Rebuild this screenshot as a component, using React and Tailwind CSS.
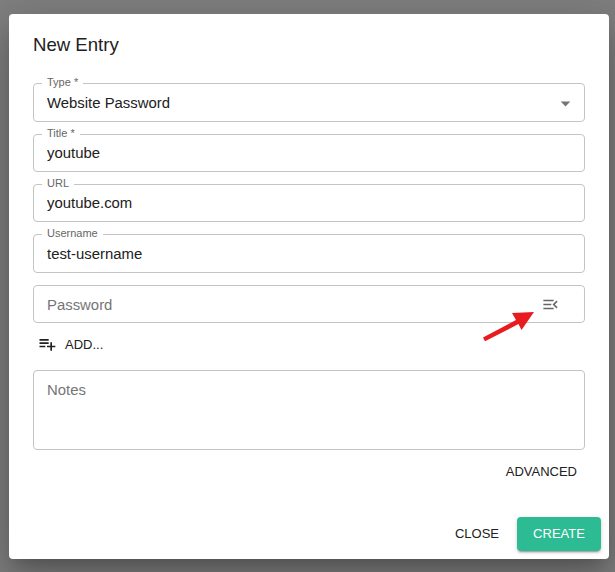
import { useState } from "react";
import { MdArrowDropDown, MdMenuOpen, MdPlaylistAdd } from "react-icons/md";

const Field = ({ label, value, onChange, className, children }) => (
  <fieldset className={`flex min-w-0 flex-col rounded-[4px] border border-[#c4c4c4] ${className}`}>
    <legend className="ml-2 h-[11px] px-[5px] text-[11px] leading-[9px] text-[#666666]">{label}</legend>
    <div className="flex h-[26px] items-center pr-[7px] pl-[13px]">
      <input className="min-w-0 flex-1 text-[14.9px] leading-[22px] outline-none" value={value} onChange={onChange} />
      {children}
    </div>
  </fieldset>
);

export default function App() {
  const [ entry, setEntry ] = useState({
    type: 'Website Password',
    title: 'youtube',
    url: 'youtube.com',
    username: 'test-username',
    password: '',
    notes: '',
  });

  const update = (key) => (e) => setEntry({ ...entry, [key]: e.target.value });

  return (
    <div className="h-screen overflow-hidden bg-[#7f7f7f] pt-[14px] pl-[9px] font-['Liberation_Sans',Arial,sans-serif] text-[#212121]">
      <div className="flex h-[545px] w-[600px] flex-col rounded-[4px] bg-white shadow-[0_11px_15px_-7px_rgba(0,0,0,0.2),0_24px_38px_3px_rgba(0,0,0,0.14),0_9px_46px_8px_rgba(0,0,0,0.12)]">
        <h2 className="h-16 px-6 pt-4 text-[18.6px] leading-[30px]">New Entry</h2>

        <div className="flex flex-col px-6">
          <Field label="Type *" value={entry.type} onChange={update('type')} className="h-11 pt-px">
            <MdArrowDropDown className="size-[23px] text-[#757575]" />
          </Field>
          <Field label="Title *" value={entry.title} onChange={update('title')} className="mt-[7px] h-[43px]" />
          <Field label="URL" value={entry.url} onChange={update('url')} className="mt-[7px] h-[43px]" />
          <Field label="Username" value={entry.username} onChange={update('username')} className="mt-[7px] h-11 pt-px" />

          <div className="relative mt-3 flex h-[38px] items-center rounded-[4px] border border-[#c4c4c4] pr-6 pl-[13px]">
            <input className="min-w-0 flex-1 pt-0.5 text-[14.9px] leading-[22px] outline-none placeholder:text-[#757575]"
              placeholder="Password" value={entry.password} onChange={update('password')} />
            <MdMenuOpen className="size-[19px] text-[#666666]" />

            {/* Points at the password menu */}
            <svg className="absolute top-[25px] left-[448px] h-[32px] w-[54px]" viewBox="0 0 54 32" fill="#e81c1f">
              <path d="M52 1 30 2 34 9 1 26.5 3 30.3 36.5 13 39.5 19Z" />
            </svg>
          </div>

          <button className="mt-[5px] flex h-8 items-center pl-1 text-[13px]">
            <MdPlaylistAdd className="mr-2 size-5" />
            <span className="pt-0.5">ADD...</span>
          </button>

          <textarea className="mt-[10px] h-20 resize-none rounded-[4px] border border-[#c4c4c4] px-[13px] py-2 text-[14.9px] leading-[22px] outline-none placeholder:text-[#757575]"
            placeholder="Notes" value={entry.notes} onChange={update('notes')} />

          <button className="mt-1 h-[34px] self-end px-2 pt-0.5 text-[13px]">ADVANCED</button>
        </div>

        <div className="mt-auto flex justify-end p-2 text-[13px]">
          <button className="h-[34px] px-[18px]">CLOSE</button>
          <button className="h-[34px] w-[84px] rounded-[4px] bg-[#2dbb93] text-white shadow-[0_3px_1px_-2px_rgba(0,0,0,0.2),0_2px_2px_0_rgba(0,0,0,0.14),0_1px_5px_0_rgba(0,0,0,0.12)]">CREATE</button>
        </div>
      </div>
    </div>
  )
}
